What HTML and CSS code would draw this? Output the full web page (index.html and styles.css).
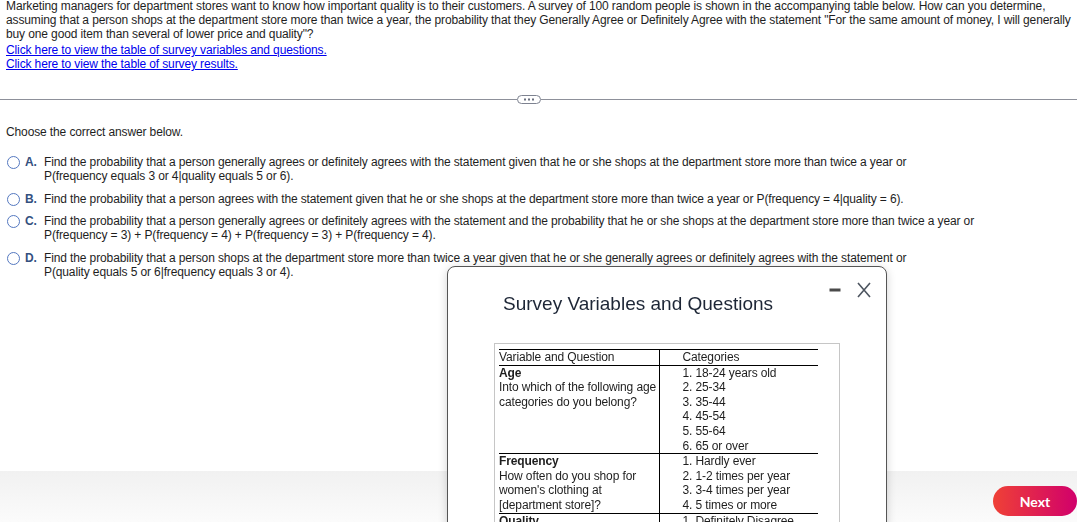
FILE: index.html
```html
<!DOCTYPE html>
<html lang="en">

<head>
  <meta charset="UTF-8">
  <meta name="viewport" content="width=device-width, initial-scale=1.0">
  <title>Survey question</title>
  <link rel="stylesheet" href="styles.css">
</head>

<body>
  <div class="question">
    <p class="prompt">Marketing managers for department stores want to know how important quality is to their customers. A survey of 100 random people is shown in the accompanying table below. How can you determine, assuming that a person shops at the department store more than twice a year, the probability that they Generally Agree or Definitely Agree with the statement "For the same amount of money, I will generally buy one good item than several of lower price and quality"?</p>
    <a class="link" href="#">Click here to view the table of survey variables and questions.</a>
    <a class="link" href="#">Click here to view the table of survey results.</a>
  </div>

  <div class="divider">
    <span class="divider-line first"></span>
    <span class="pill">
      <svg width="12" height="3" viewBox="0 0 12 3"><rect x="1" y="0.5" width="2" height="2" fill="#6b7080"/><rect x="5" y="0.5" width="2" height="2" fill="#6b7080"/><rect x="9" y="0.5" width="2" height="2" fill="#6b7080"/></svg>
    </span>
    <span class="divider-line"></span>
  </div>

  <div class="answers">
    <p class="instruction">Choose the correct answer below.</p>
    <ul class="options">
      <li class="option">
        <span class="radio"></span>
        <span class="letter">A.</span>
        <span class="option-text">Find the probability that a person generally agrees or definitely agrees with the statement given that he or she shops at the department store more than twice a year or<br>P(frequency equals 3 or 4|quality equals 5 or 6).</span>
      </li>
      <li class="option">
        <span class="radio"></span>
        <span class="letter">B.</span>
        <span class="option-text">Find the probability that a person agrees with the statement given that he or she shops at the department store more than twice a year or P(frequency = 4|quality = 6).</span>
      </li>
      <li class="option">
        <span class="radio"></span>
        <span class="letter">C.</span>
        <span class="option-text">Find the probability that a person generally agrees or definitely agrees with the statement and the probability that he or she shops at the department store more than twice a year or<br>P(frequency = 3) + P(frequency = 4) + P(frequency = 3) + P(frequency = 4).</span>
      </li>
      <li class="option">
        <span class="radio"></span>
        <span class="letter">D.</span>
        <span class="option-text">Find the probability that a person shops at the department store more than twice a year given that he or she generally agrees or definitely agrees with the statement or<br>P(quality equals 5 or 6|frequency equals 3 or 4).</span>
      </li>
    </ul>
  </div>

  <div class="dialog">
    <div class="dialog-head">
      <h2 class="dialog-title">Survey Variables and Questions</h2>
      <div class="window-controls">
        <svg width="16" height="16" viewBox="0 0 16 16"><rect x="2.5" y="6.5" width="11" height="3" fill="#4a4a4a"/></svg>
        <svg width="16" height="16" viewBox="0 0 16 16"><path d="M2 1 L14 15 M14 1 L2 15" stroke="#4d5560" stroke-width="1.6" fill="none"/></svg>
      </div>
    </div>
    <div class="table-box">
      <table class="survey">
        <tr class="head-row">
          <td class="col-var">Variable and Question</td>
          <td class="col-cat">Categories</td>
        </tr>
        <tr>
          <td class="col-var"><b>Age</b><br>Into which of the following age<br>categories do you belong?</td>
          <td class="col-cat">1. 18-24 years old<br>2. 25-34<br>3. 35-44<br>4. 45-54<br>5. 55-64<br>6. 65 or over</td>
        </tr>
        <tr>
          <td class="col-var"><b>Frequency</b><br>How often do you shop for<br>women's clothing at<br>[department store]?</td>
          <td class="col-cat">1. Hardly ever<br>2. 1-2 times per year<br>3. 3-4 times per year<br>4. 5 times or more</td>
        </tr>
        <tr>
          <td class="col-var"><b>Quality</b><br>For the same amount of money,</td>
          <td class="col-cat">1. Definitely Disagree<br>2. Generally Disagree</td>
        </tr>
      </table>
    </div>
  </div>

  <div class="footer-bar">
    <button class="next-btn">Next</button>
  </div>
</body>

</html>
```

FILE: styles.css
```css
* {
  margin: 0;
  padding: 0;
  box-sizing: border-box;
}

body {
  font-family: "Liberation Sans", Arial, sans-serif;
  font-size: 12px;
  line-height: 14px;
  letter-spacing: -0.12px;
  color: #1e1e1e;
  background: #fff;
  overflow: hidden;
  height: 522px;
}

.question {
  padding: 0 6px;
  margin-top: -1px;
}

.prompt {
  margin-bottom: 2px;
}

.link {
  display: block;
  width: max-content;
  color: #0000ee;
  text-decoration: underline;
}

/* --------分隔線---------*/
.divider {
  display: flex;
  align-items: center;
  margin-top: 24px;
  height: 9px;
}

.divider-line {
  flex: 1;
  height: 1px;
  background: #8d909a;
}

.divider-line.first {
  flex: 0 0 517px;
}

.pill {
  display: flex;
  align-items: center;
  justify-content: center;
  width: 24px;
  height: 9px;
  border: 1px solid #7d8290;
  border-radius: 5px;
  background: #fff;
}

.answers {
  padding: 0 6px;
  margin-top: 21px;
}

.instruction {
  margin-bottom: 16px;
}

.options {
  list-style: none;
}

.option {
  display: flex;
  align-items: flex-start;
  margin-bottom: 8.5px;
}

.radio {
  flex: 0 0 13px;
  width: 13px;
  height: 13px;
  margin: 1px 5px 0 1px;
  border: 1.5px solid #5478c0;
  border-radius: 50%;
}

.letter {
  flex: 0 0 19px;
  font-weight: bold;
  color: #34507f;
}

.option-text {
  flex: 1;
}

/* --------視窗---------*/
.dialog {
  position: absolute;
  left: 447px;
  top: 266px;
  width: 440px;
  height: 300px;
  background: #fff;
  border: 1px solid #555;
  border-radius: 8px;
  box-shadow: 0 2px 10px rgba(0, 0, 0, 0.18);
  z-index: 2;
}

.dialog-head {
  display: flex;
  justify-content: space-between;
  align-items: flex-start;
  padding: 15px 14px 0 55px;
}

.dialog-title {
  margin-top: 10px;
  font-size: 19px;
  line-height: 24px;
  font-weight: normal;
  letter-spacing: 0;
  color: #1d2636;
}

.window-controls {
  display: flex;
  gap: 13px;
}

.table-box {
  width: 346px;
  height: 200px;
  margin: 27px 0 0 46px;
  padding: 5px 0 0 4px;
  border: 1px solid #c6c6c6;
  border-bottom: none;
  overflow: hidden;
}

.survey {
  width: 319px;
  table-layout: fixed;
  border-collapse: collapse;
  font-size: 12px;
  line-height: 14.6px;
  color: #1e1e1e;
}

.survey tr {
  border-bottom: 1px solid #000;
}

.survey .head-row {
  border-top: 1.5px solid #000;
}

.survey td {
  vertical-align: top;
  padding: 0;
  white-space: nowrap;
}

.col-var {
  width: 160px;
  border-right: 1px solid #000;
}

.col-cat {
  padding-left: 23px !important;
}

/* --------底部---------*/
.footer-bar {
  position: fixed;
  left: 0;
  right: 0;
  bottom: 0;
  height: 51px;
  display: flex;
  justify-content: flex-end;
  align-items: flex-start;
  padding: 15px 0 0 0;
  background: linear-gradient(#f1f1f1, #fbfbfb);
  z-index: 1;
}

.next-btn {
  width: 84px;
  height: 30px;
  border: none;
  border-radius: 15px;
  background: linear-gradient(90deg, #ef4136, #d1006b);
  color: #fff;
  font-family: Lato, "Liberation Sans", sans-serif;
  font-weight: bold;
  font-size: 14px;
}
```
